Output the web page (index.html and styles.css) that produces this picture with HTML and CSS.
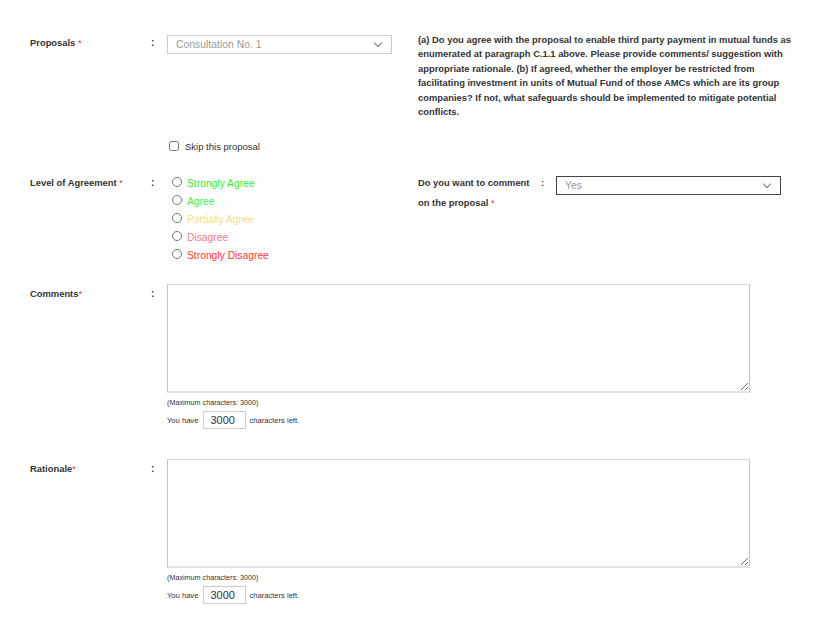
FILE: index.html
```html
<!DOCTYPE html>
<html lang="en">
<head>
    <meta charset="UTF-8">
    <meta name="viewport" content="width=device-width, initial-scale=1.0">
    <title>Public Consultation - Response</title>
    <link rel="stylesheet" href="styles.css">
</head>
<body>
    <form class="consult-form">
        <!-- Proposal selection + question text -->
        <div class="row row-proposal">
            <label class="label">Proposals <span class="req">*</span></label>
            <span class="colon">:</span>
            <div class="field">
                <div class="proposal-line">
                    <div class="select-box">
                        <select class="select">
                            <option>Consultation No. 1</option>
                        </select>
                    </div>
                    <p class="question">(a) Do you agree with the proposal to enable third party payment in mutual funds as enumerated at paragraph C.1.1 above. Please provide comments/ suggestion with appropriate rationale. (b) If agreed, whether the employer be restricted from facilitating investment in units of Mutual Fund of those AMCs which are its group companies? If not, what safeguards should be implemented to mitigate potential conflicts.</p>
                </div>
                <label class="skip">
                    <input type="checkbox" class="check">
                    <span>Skip this proposal</span>
                </label>
            </div>
        </div>

        <!-- Level of agreement -->
        <div class="row row-agreement">
            <label class="label">Level of Agreement <span class="req">*</span></label>
            <span class="colon">:</span>
            <div class="field agreement-line">
                <div class="radios">
                    <label class="radio"><input type="radio" name="level"><span class="lvl-strong-agree">Strongly Agree</span></label>
                    <label class="radio"><input type="radio" name="level"><span class="lvl-agree">Agree</span></label>
                    <label class="radio"><input type="radio" name="level"><span class="lvl-partial">Partially Agree</span></label>
                    <label class="radio"><input type="radio" name="level"><span class="lvl-disagree">Disagree</span></label>
                    <label class="radio"><input type="radio" name="level"><span class="lvl-strong-disagree">Strongly Disagree</span></label>
                </div>
                <div class="comment-choice">
                    <div class="comment-label">
                        <span class="cl-top">Do you want to comment <span class="cl-colon">:</span></span>
                        <span class="cl-bottom">on the proposal <span class="req">*</span></span>
                    </div>
                    <div class="select-box select-dark">
                        <select class="select">
                            <option>Yes</option>
                        </select>
                    </div>
                </div>
            </div>
        </div>

        <!-- Comments -->
        <div class="row row-text">
            <label class="label">Comments<span class="req">*</span></label>
            <span class="colon">:</span>
            <div class="field">
                <textarea class="textarea"></textarea>
                <p class="max-chars">(Maximum characters: 3000)</p>
                <p class="counter">You have <input type="text" class="count" value="3000" readonly> characters left.</p>
            </div>
        </div>

        <!-- Rationale -->
        <div class="row row-text">
            <label class="label">Rationale<span class="req">*</span></label>
            <span class="colon">:</span>
            <div class="field">
                <textarea class="textarea"></textarea>
                <p class="max-chars">(Maximum characters: 3000)</p>
                <p class="counter">You have <input type="text" class="count" value="3000" readonly> characters left.</p>
            </div>
        </div>
    </form>
</body>
</html>
```

FILE: styles.css
```css
:root {
    --text-dark: #333333;
    --text-muted: #999999;
    --border-light: #cccccc;
    --required: #e8343a;
    --white: #FFFFFF;
}

* {
    margin: 0;
    padding: 0;
    box-sizing: border-box;
}

body {
    background-color: var(--white);
    color: var(--text-dark);
    font-family: 'Liberation Sans', Arial, sans-serif;
}

.consult-form {
    padding: 34px 0 0 30px;
}

.row {
    display: grid;
    grid-template-columns: 121px 16px 1fr;
    align-items: start;
}

.label {
    font-size: 9.4px;
    font-weight: bold;
    line-height: 18px;
}

.req {
    color: var(--required);
    font-weight: normal;
}

.colon {
    font-size: 10px;
    font-weight: bold;
    line-height: 18px;
}

/* ---- proposal row ---- */
.proposal-line {
    display: flex;
    align-items: flex-start;
}

.select-box {
    position: relative;
    width: 225px;
    height: 19px;
    flex-shrink: 0;
}

.select {
    width: 100%;
    height: 100%;
    appearance: none;
    -webkit-appearance: none;
    border: 1px solid var(--border-light);
    border-radius: 0;
    background: var(--white);
    color: var(--text-muted);
    font-family: 'Liberation Sans', Arial, sans-serif;
    font-size: 10.4px;
    padding: 0 8px;
}

.select-box::after {
    content: "";
    position: absolute;
    right: 11px;
    top: 6px;
    width: 5px;
    height: 5px;
    border-right: 1.2px solid #777;
    border-bottom: 1.2px solid #777;
    transform: rotate(45deg);
    pointer-events: none;
}

.select-dark .select {
    border-color: #444444;
}

.question {
    margin-left: 26px;
    width: 386px;
    font-size: 9.4px;
    font-weight: bold;
    line-height: 14.4px;
    margin-top: -1px;
}

.skip {
    display: flex;
    align-items: center;
    margin-top: 20px;
    margin-left: 2px;
    font-size: 9.5px;
    height: 14px;
}

.check {
    width: 10px;
    height: 10px;
    margin-right: 6px;
}

/* ---- agreement row ---- */
.row-agreement {
    margin-top: 21px;
}

.agreement-line {
    display: flex;
}

.radios {
    display: flex;
    flex-direction: column;
    width: 251px;
}

.radio {
    display: flex;
    align-items: center;
    height: 18px;
    font-size: 10.3px;
    padding-left: 5px;
}

.radio input {
    width: 10px;
    height: 10px;
    margin-right: 5px;
    margin-top: -2px;
}

.lvl-strong-agree { color: #33ee33; }
.lvl-agree { color: #44ee44; }
.lvl-partial { color: #f6dc82; }
.lvl-disagree { color: #f07c86; }
.lvl-strong-disagree { color: #ff3838; }

.comment-choice {
    display: flex;
    align-items: flex-start;
    margin-top: 1px;
}

.comment-label {
    display: flex;
    flex-direction: column;
    width: 138px;
    margin-top: -2px;
    font-size: 9.4px;
    font-weight: bold;
    line-height: 20px;
}

.cl-colon {
    margin-left: 9px;
}

/* ---- comments / rationale ---- */
.row-text {
    margin-top: 20px;
}

.row-text .label,
.row-text .colon {
    margin-top: 1px;
}

.row-text + .row-text {
    margin-top: 30px;
}

.textarea {
    display: block;
    width: 583px;
    height: 109px;
    border: 1px solid #c4c4c4;
    border-top-color: #d8d8d8;
    border-bottom: 2px solid #e4e4e4;
    resize: both;
    font-family: 'Liberation Sans', Arial, sans-serif;
}

.max-chars {
    font-size: 7.2px;
    margin-top: 5px;
    line-height: 10px;
}

.counter {
    display: flex;
    align-items: center;
    font-size: 7.6px;
    margin-top: 3px;
}

.count {
    width: 43px;
    height: 18px;
    margin: 0 3px 0 5px;
    border: 1px solid var(--border-light);
    font-family: 'Liberation Sans', Arial, sans-serif;
    font-size: 11px;
    color: var(--text-dark);
    padding: 0 6px;
}
```
